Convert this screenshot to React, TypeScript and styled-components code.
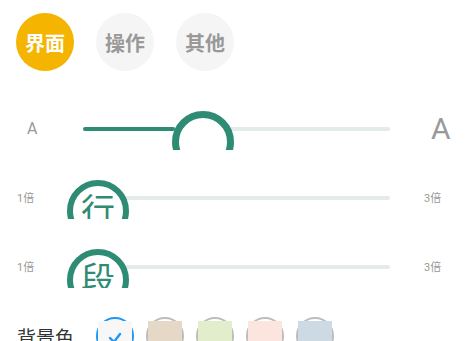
import React from 'react';
import styled, { createGlobalStyle } from 'styled-components';

const GlobalStyle = createGlobalStyle`
  html, body {
    margin: 0;
    padding: 0;
    background: #ffffff;
    overflow: hidden;
  }
  body {
    font-family: Roboto, "Noto Sans CJK SC", sans-serif;
  }
`;

const Panel = styled.div`
  width: 467px;
  height: 341px;
  overflow: hidden;
  background: #fff;
`;

const Tabs = styled.div`
  display: flex;
  gap: 22px;
  padding: 13px 16px 10px;
`;

const Tab = styled.div<{ $active?: boolean }>`
  width: 58px;
  height: 58px;
  border-radius: 50%;
  display: flex;
  align-items: center;
  justify-content: center;
  font-size: 20px;
  font-weight: 700;
  background: ${(p) => (p.$active ? '#f4b400' : '#f5f5f5')};
  color: ${(p) => (p.$active ? '#ffffff' : '#999999')};
`;

const SliderRow = styled.div`
  height: 69px;
  display: flex;
  align-items: flex-start;
  overflow: hidden;
`;

const StartLabel = styled.div<{ $pad: number; $size: number }>`
  width: 83px;
  box-sizing: border-box;
  padding-left: ${(p) => p.$pad}px;
  margin-top: 48px;
  transform: translateY(-50%);
  font-size: ${(p) => p.$size}px;
  line-height: 1;
  color: #999;
`;

const EndLabel = styled(StartLabel)`
  width: 77px;
`;

const Track = styled.div`
  position: relative;
  width: 307px;
  height: 4px;
  margin-top: 46px;
  border-radius: 2px;
  background: #e3ecea;
`;

const Fill = styled.div<{ $width: number }>`
  width: ${(p) => p.$width}px;
  height: 100%;
  border-radius: 2px;
  background: #2f8c74;
`;

const Thumb = styled.div<{ $left: number; $stroke: number }>`
  position: absolute;
  left: ${(p) => p.$left}px;
  top: -16px;
  width: 62px;
  height: 62px;
  box-sizing: border-box;
  border-radius: 50%;
  border: ${(p) => p.$stroke}px solid #2f8c74;
  background: #fff;
  display: flex;
  align-items: center;
  justify-content: center;
  color: #2f8c74;
  font-size: 34px;
  line-height: 1;
`;

const ColorRow = styled.div`
  display: flex;
  align-items: center;
  padding-top: 29px;
`;

const ColorLabel = styled.div`
  width: 96px;
  box-sizing: border-box;
  padding-left: 17px;
  font-size: 19px;
  color: #333;
`;

const Swatches = styled.div`
  display: flex;
  gap: 12px;
`;

const Swatch = styled.div<{ $selected?: boolean }>`
  width: 38px;
  height: 38px;
  box-sizing: border-box;
  border-radius: 50%;
  border: 2px solid ${(p) => (p.$selected ? '#2196f3' : '#bdbdbd')};
  background: ${(p) => (p.$selected ? '#f7f7f7' : '#fff')};
  display: flex;
  justify-content: center;
  align-items: flex-start;
  padding-top: 2px;
`;

const Chip = styled.div<{ $color: string }>`
  width: 34px;
  height: 34px;
  flex-shrink: 0;
  background: ${(p) => p.$color};
  display: flex;
  align-items: center;
  justify-content: center;
`;

const Check = () => (
  <svg width="14" height="12" viewBox="0 0 14 12">
    <polyline
      points="2,6 6,10 12,2"
      fill="none"
      stroke="#2196f3"
      strokeWidth="2.4"
      strokeLinecap="round"
      strokeLinejoin="round"
    />
  </svg>
);

const colors = ['#f7f7f7', '#e6d8c7', '#e2edcb', '#fde5df', '#cddae4'];

const App = (): React.ReactElement => (
  <Panel>
    <GlobalStyle />
    <Tabs>
      <Tab $active>界面</Tab>
      <Tab>操作</Tab>
      <Tab>其他</Tab>
    </Tabs>

    <SliderRow>
      <StartLabel $pad={27} $size={16}>A</StartLabel>
      <Track>
        <Fill $width={92} />
        <Thumb $left={89} $stroke={7} />
      </Track>
      <EndLabel $pad={41} $size={30}>A</EndLabel>
    </SliderRow>

    <SliderRow>
      <StartLabel $pad={17} $size={11}>1倍</StartLabel>
      <Track>
        <Thumb $left={-16} $stroke={6}>行</Thumb>
      </Track>
      <EndLabel $pad={34} $size={11}>3倍</EndLabel>
    </SliderRow>

    <SliderRow>
      <StartLabel $pad={17} $size={11}>1倍</StartLabel>
      <Track>
        <Thumb $left={-16} $stroke={6}>段</Thumb>
      </Track>
      <EndLabel $pad={34} $size={11}>3倍</EndLabel>
    </SliderRow>

    <ColorRow>
      <ColorLabel>背景色</ColorLabel>
      <Swatches>
        {colors.map((c, i) => (
          <Swatch key={c} $selected={i === 0}>
            <Chip $color={c}>{i === 0 && <Check />}</Chip>
          </Swatch>
        ))}
      </Swatches>
    </ColorRow>
  </Panel>
);

export default App;
